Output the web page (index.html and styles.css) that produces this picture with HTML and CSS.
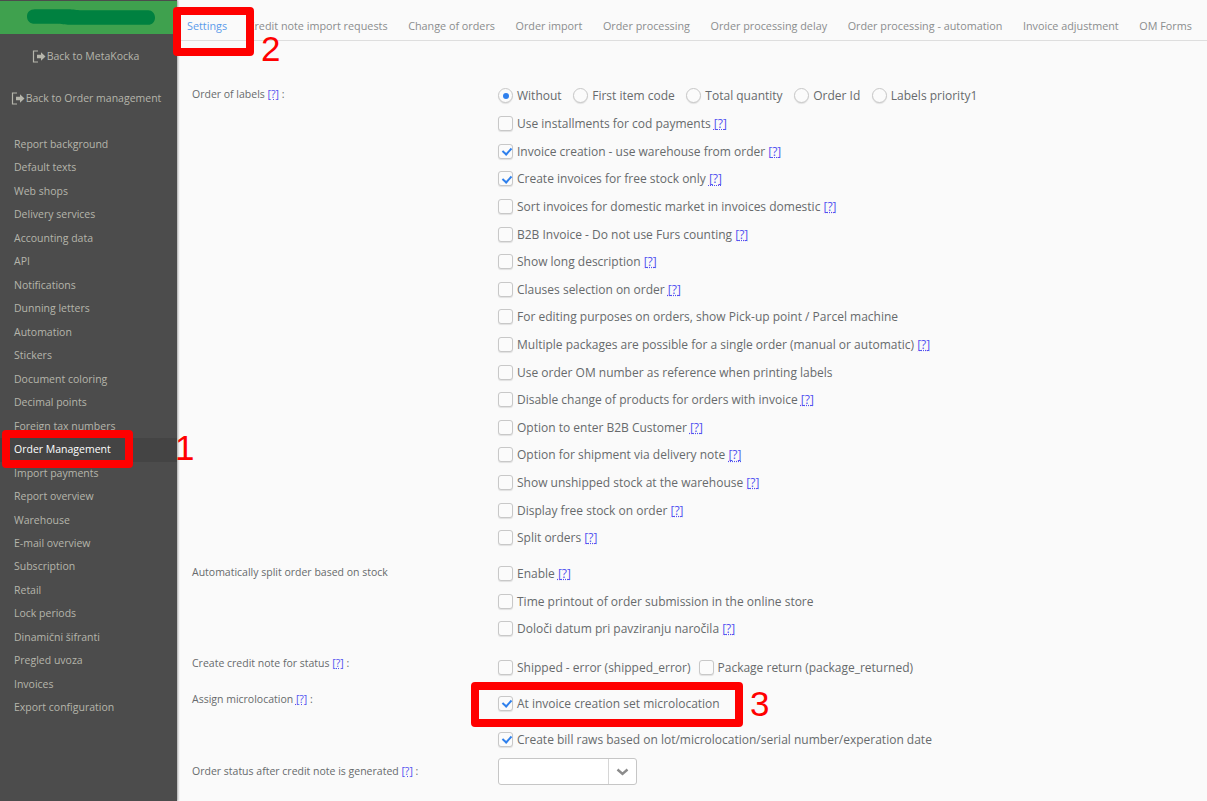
FILE: index.html
```html
<!DOCTYPE html>
<html lang="en">
<head>
<meta charset="utf-8">
<title>Settings</title>
<link rel="stylesheet" href="styles.css">
</head>
<body>
<div class="app">
  <aside class="sidebar">
    <div class="brand"><svg class="blob" width="132" height="17" viewBox="0 0 132 17"><path d="M8 0H42C48 0 50 1 56 1H124C128 1 131 4.500 131 8.500C131 13 128 16 124 16H44C38 16 36 15 30 15H8C3 15 0 12 0 7.500C0 3 3 0 8 0Z" fill="#008140"/></svg></div>
    <a class="back back-first"><svg class="exit" width="14" height="13" viewBox="0 0 14 13"><path d="M6 1H1.500V12H6" fill="none" stroke="#b5b5ab" stroke-width="1.200"/><path d="M5 4.800H9V2.300L13.500 6.500L9 10.700V8.200H5Z" fill="#b5b5ab"/></svg>Back to MetaKocka</a>
    <a class="back back-second"><svg class="exit" width="14" height="13" viewBox="0 0 14 13"><path d="M6 1H1.500V12H6" fill="none" stroke="#b5b5ab" stroke-width="1.200"/><path d="M5 4.800H9V2.300L13.500 6.500L9 10.700V8.200H5Z" fill="#b5b5ab"/></svg>Back to Order management</a>
    <nav class="menu">
      <a>Report background</a><a>Default texts</a><a>Web shops</a><a>Delivery services</a><a>Accounting data</a><a>API</a><a>Notifications</a><a>Dunning letters</a><a>Automation</a><a>Stickers</a><a>Document coloring</a><a>Decimal points</a><a>Foreign tax numbers</a><a class="active">Order Management</a><a>Import payments</a><a>Report overview</a><a>Warehouse</a><a>E-mail overview</a><a>Subscription</a><a>Retail</a><a>Lock periods</a><a>Dinamični šifranti</a><a>Pregled uvoza</a><a>Invoices</a><a>Export configuration</a>
    </nav>
  </aside>
  <main class="main">
    <div class="tabs">
      <a class="tab current">Settings</a><a class="tab">Credit note import requests</a><a class="tab">Change of orders</a><a class="tab">Order import</a><a class="tab">Order processing</a><a class="tab">Order processing delay</a><a class="tab">Order processing - automation</a><a class="tab">Invoice adjustment</a><a class="tab">OM Forms</a>
    </div>
    <div class="form">
      <section class="group g-labels">
        <div class="label">Order of labels <a class="help">[?]</a> :</div>
        <div class="fields">
          <div class="line radios">
            <span class="opt"><i class="radio on"></i>Without</span>
            <span class="opt"><i class="radio"></i>First item code</span>
            <span class="opt"><i class="radio"></i>Total quantity</span>
            <span class="opt"><i class="radio"></i>Order Id</span>
            <span class="opt"><i class="radio"></i>Labels priority1</span>
          </div>
          <div class="line"><i class="check"></i>Use installments for cod payments <a class="help">[?]</a></div>
          <div class="line"><i class="check on"></i>Invoice creation - use warehouse from order <a class="help">[?]</a></div>
          <div class="line"><i class="check on"></i>Create invoices for free stock only <a class="help">[?]</a></div>
          <div class="line"><i class="check"></i>Sort invoices for domestic market in invoices domestic <a class="help">[?]</a></div>
          <div class="line"><i class="check"></i>B2B Invoice - Do not use Furs counting <a class="help">[?]</a></div>
          <div class="line"><i class="check"></i>Show long description <a class="help">[?]</a></div>
          <div class="line"><i class="check"></i>Clauses selection on order <a class="help">[?]</a></div>
          <div class="line"><i class="check"></i>For editing purposes on orders, show Pick-up point / Parcel machine</div>
          <div class="line"><i class="check"></i>Multiple packages are possible for a single order (manual or automatic) <a class="help">[?]</a></div>
          <div class="line"><i class="check"></i>Use order OM number as reference when printing labels</div>
          <div class="line"><i class="check"></i>Disable change of products for orders with invoice <a class="help">[?]</a></div>
          <div class="line"><i class="check"></i>Option to enter B2B Customer <a class="help">[?]</a></div>
          <div class="line"><i class="check"></i>Option for shipment via delivery note <a class="help">[?]</a></div>
          <div class="line"><i class="check"></i>Show unshipped stock at the warehouse <a class="help">[?]</a></div>
          <div class="line"><i class="check"></i>Display free stock on order <a class="help">[?]</a></div>
          <div class="line"><i class="check"></i>Split orders <a class="help">[?]</a></div>
        </div>
      </section>
      <section class="group g-split">
        <div class="label">Automatically split order based on stock</div>
        <div class="fields">
          <div class="line"><i class="check"></i>Enable <a class="help">[?]</a></div>
          <div class="line"><i class="check"></i>Time printout of order submission in the online store</div>
          <div class="line"><i class="check"></i>Določi datum pri pavziranju naročila <a class="help">[?]</a></div>
        </div>
      </section>
      <section class="group g-credit">
        <div class="label">Create credit note for status <a class="help">[?]</a> :</div>
        <div class="fields">
          <div class="line radios narrow">
            <span class="opt"><i class="check"></i>Shipped - error (shipped_error)</span>
            <span class="opt"><i class="check"></i>Package return (package_returned)</span>
          </div>
        </div>
      </section>
      <section class="group g-micro">
        <div class="label">Assign microlocation <a class="help">[?]</a> :</div>
        <div class="fields micro-fields">
          <div class="line"><i class="check on"></i>At invoice creation set microlocation</div>
          <div class="line"><i class="check on"></i>Create bill raws based on lot/microlocation/serial number/experation date</div>
        </div>
      </section>
      <section class="group g-status">
        <div class="label">Order status after credit note is generated <a class="help">[?]</a> :</div>
        <div class="fields">
          <div class="select"><span class="value"></span><span class="arrow"><svg width="13" height="8" viewBox="0 0 13 8"><path d="M1.500 1.500L6.500 6L11.500 1.500" fill="none" stroke="#8c8c8c" stroke-width="2.400"/></svg></span></div>
        </div>
      </section>
    </div>
  </main>
</div>
<div class="mark mark-1"></div><span class="num num-1">1</span>
<div class="mark mark-2"></div><span class="num num-2">2</span>
<div class="mark mark-3"></div><span class="num num-3">3</span>
</body>
</html>
```
FILE: styles.css
```css
* { box-sizing: border-box; }
html, body { margin: 0; height: 100%; }
body {
  width: 1207px;
  height: 801px;
  overflow: hidden;
  position: relative;
  background: #fafafa;
  font-family: "Open Sans", "Liberation Sans", sans-serif;
  font-size: 12px;
  color: #676a6c;
}
.app { display: flex; height: 801px; padding-top: 1px; }
.sidebar {
  width: 177px;
  flex: none;
  background: #4c4c4c;
  box-shadow: 1px 0 2px rgba(0,0,0,.35);
  color: #b5b5ab;
  margin-top: -1px;
  padding-top: 1px;
}
.brand {
  height: 33px;
  background: #3fa14e;
  display: flex;
  align-items: center;
  padding: 0 0 1px 27px;
}
.blob { display: block; width: 129px; height: 17px; }
.back {
  display: flex;
  align-items: center;
  justify-content: center;
  font-size: 10.500px;
  height: 16px;
  white-space: nowrap;
}
.back-first { margin-top: 14px; padding-right: 6px; }
.back-second { margin-top: 26px; padding-right: 5px; }
.exit { margin-right: 1px; flex: none; }
.menu { margin-top: 27px; display: flex; flex-direction: column; }
.menu a {
  display: block;
  height: 23.480px;
  line-height: 23.480px;
  padding-left: 14px;
  font-size: 10.500px;
  white-space: nowrap;
}
.menu a.active { background: #444; color: #fff; }
.main { flex: 1; min-width: 0; }
.tabs {
  height: 40px;
  border-bottom: 1px solid #dedede;
  display: flex;
  padding-left: 5px;
  white-space: nowrap;
  overflow: hidden;
}
.tab {
  padding: 0 5px;
  margin-right: 10.600px;
  height: 40px;
  font-size: 10.800px;
  color: #8b8d8e;
  line-height: 50px;
}
.tab.current { color: #5b9bea; border-bottom: 1px solid #2f80ed; }
.form { padding: 41.400px 0 0 15px; }
.group { display: flex; }
.label { width: 306px; flex: none; font-size: 10.500px; line-height: 24px; }
.g-labels .label { margin-top: -0.900px; }
.fields { flex: 1; }
.help { color: #5252f0; text-decoration: underline dotted; }
.line {
  height: 27.530px;
  display: flex;
  align-items: center;
  white-space: pre-wrap;
  color: #676a6c;
}
.g-labels .line { height: 27.600px; }
.radios { gap: 11.600px; }
.g-labels .radios { padding-bottom: 1px; }
.radios.narrow { gap: 8px; }
.opt { display: inline-flex; align-items: center; }
.check, .radio {
  display: inline-block;
  flex: none;
  width: 15px;
  height: 15px;
  margin-right: 4px;
  background: #fbfbfb;
  border: 1px solid #c8c8c8;
  box-shadow: 0 1px 1px rgba(0,0,0,.1);
  position: relative;
}
.check { border-radius: 3px; }
.radio { border-radius: 50%; }
.radio.on::after {
  content: "";
  position: absolute;
  left: 3.500px;
  top: 3.500px;
  width: 6px;
  height: 6px;
  border-radius: 50%;
  background: #2f80ed;
}
.check.on::after {
  content: "";
  position: absolute;
  left: 4.500px;
  top: 1.500px;
  width: 4px;
  height: 7px;
  border: solid #2f80ed;
  border-width: 0 2px 2px 0;
  transform: rotate(42deg);
}
.g-split { margin-top: 8.400px; }
.g-credit { margin-top: 11px; }
.g-credit .label { margin-top: -2px; }
.g-micro { margin-top: 4.500px; }
.g-micro .label { margin-top: 2px; }
.micro-fields .line { height: 36px; }
.g-status { margin-top: 1px; }
.g-status .label { margin-top: 1px; }
.select {
  width: 139px;
  height: 27px;
  display: flex;
  background: #fff;
  border: 1px solid #c6c6c6;
  border-radius: 3px;
}
.value { flex: 1; }
.arrow {
  width: 28px;
  border-left: 1px solid #d6d6d6;
  display: flex;
  align-items: center;
  justify-content: center;
}
.mark {
  position: absolute;
  border: 8px solid #f00;
  border-radius: 4px;
}
.mark-1 { left: 2px; top: 430px; width: 131px; height: 38px; }
.mark-2 { left: 173px; top: 7px; width: 81px; height: 49px; }
.mark-3 { left: 471px; top: 682px; width: 272px; height: 45px; }
.num {
  position: absolute;
  color: #f00;
  font-family: "Liberation Sans", sans-serif;
  font-size: 35px;
  line-height: 40px;
}
.num-1 { left: 175px; top: 428px; }
.num-2 { left: 261px; top: 29px; }
.num-3 { left: 750px; top: 684px; }
```
